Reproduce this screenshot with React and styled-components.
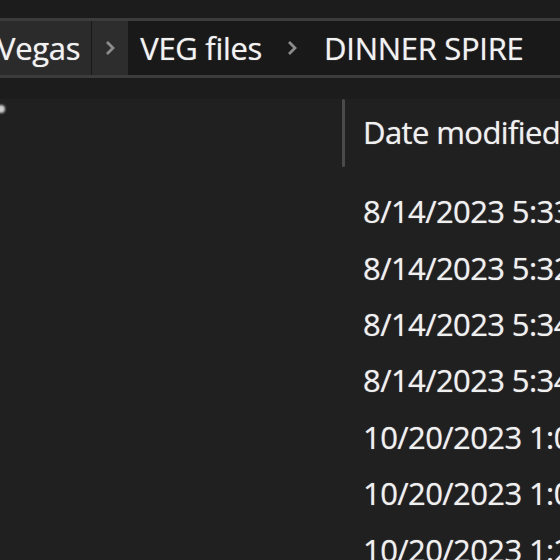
import React from 'react';
import styled, { createGlobalStyle } from 'styled-components';

const GlobalStyle = createGlobalStyle`
  html, body {
    margin: 0;
    padding: 0;
    background: #1c1c1c;
  }
`;

const Window = styled.div`
  width: 560px;
  height: 560px;
  overflow: hidden;
  background: #202020;
  font-family: 'Open Sans', 'Noto Sans', sans-serif;
  color: #f2f2f2;
  display: flex;
  flex-direction: column;
`;

const TopStrip = styled.div`
  height: 18px;
  background: #1c1c1c;
  flex-shrink: 0;
`;

const Rule = styled.div`
  height: 3px;
  background: #3c3c3c;
  flex-shrink: 0;
`;

const AddressBar = styled.div`
  height: 54px;
  background: #191919;
  display: flex;
  align-items: stretch;
  flex-shrink: 0;
  white-space: nowrap;
`;

const Crumb = styled.div`
  display: flex;
  align-items: center;
  font-size: 31px;
  letter-spacing: -0.3px;
  text-shadow: 0 0 1px rgba(255, 255, 255, 0.6);
  padding: ${(p) => p.$pad || '0 12px'};
  background: ${(p) => (p.$active ? '#2b2b2b' : 'transparent')};
  margin-right: ${(p) => p.$gap || '0'};
`;

const Chevron = styled.div`
  width: 36px;
  display: flex;
  align-items: center;
  justify-content: center;
  background: ${(p) => (p.$active ? '#2d2d2d' : 'transparent')};
  margin-right: 1px;
`;

const ToolGap = styled.div`
  height: 21px;
  background: #1c1c1c;
  flex-shrink: 0;
`;

const Body = styled.div`
  flex: 1;
  display: flex;
  position: relative;
`;

const NavPane = styled.div`
  width: 342px;
  flex-shrink: 0;
  position: relative;
`;

const Dot = styled.div`
  position: absolute;
  left: -3px;
  top: 6px;
  width: 8px;
  height: 8px;
  border-radius: 50%;
  background: #cfcfcf;
  filter: blur(1px);
`;

const List = styled.div`
  flex: 1;
  display: flex;
  flex-direction: column;
  white-space: nowrap;
`;

const Header = styled.div`
  height: 68px;
  display: flex;
  align-items: center;
  margin-bottom: 17px;
`;

const ColumnRule = styled.div`
  width: 3px;
  height: 68px;
  background: #4a4a4a;
  border-radius: 2px;
  margin-right: 18px;
`;

const Cell = styled.div`
  font-size: 31px;
  letter-spacing: -0.6px;
  color: #f0f0f0;
  text-shadow: 0 0 1px rgba(255, 255, 255, 0.6);
  padding-left: ${(p) => p.$indent || '0'};
  margin-top: -2px;
`;

const Row = styled.div`
  height: 56.4px;
  display: flex;
  align-items: center;
`;

const dates = [
  '8/14/2023 5:33 PM',
  '8/14/2023 5:32 PM',
  '8/14/2023 5:34 PM',
  '8/14/2023 5:34 PM',
  '10/20/2023 1:05 PM',
  '10/20/2023 1:07 PM',
  '10/20/2023 1:22 PM',
];

const ChevronIcon = () => (
  <svg width="12" height="18" viewBox="0 0 12 18">
    <path d="M3 3 L9 9 L3 15" fill="none" stroke="#8c8c8c" strokeWidth="2.8" />
  </svg>
);

export default function App() {
  return (
    <>
      <GlobalStyle />
      <Window>
        <TopStrip />
        <Rule />
        <AddressBar>
          <Crumb $active $pad="0 11px 0 0" $gap="1px" style={{ marginLeft: -3 }}>
            Vegas
          </Crumb>
          <Chevron $active>
            <ChevronIcon />
          </Chevron>
          <Crumb $pad="0 12px 0 11px">VEG files</Crumb>
          <Chevron>
            <ChevronIcon />
          </Chevron>
          <Crumb $pad="0 12px 0 13px">DINNER SPIRE</Crumb>
        </AddressBar>
        <Rule />
        <ToolGap />
        <Body>
          <NavPane>
            <Dot />
          </NavPane>
          <List>
            <Header>
              <ColumnRule />
              <Cell>Date modified</Cell>
            </Header>
            {dates.map((d, i) => (
              <Row key={i}>
                <Cell $indent="21px">{d}</Cell>
              </Row>
            ))}
          </List>
        </Body>
      </Window>
    </>
  );
}
